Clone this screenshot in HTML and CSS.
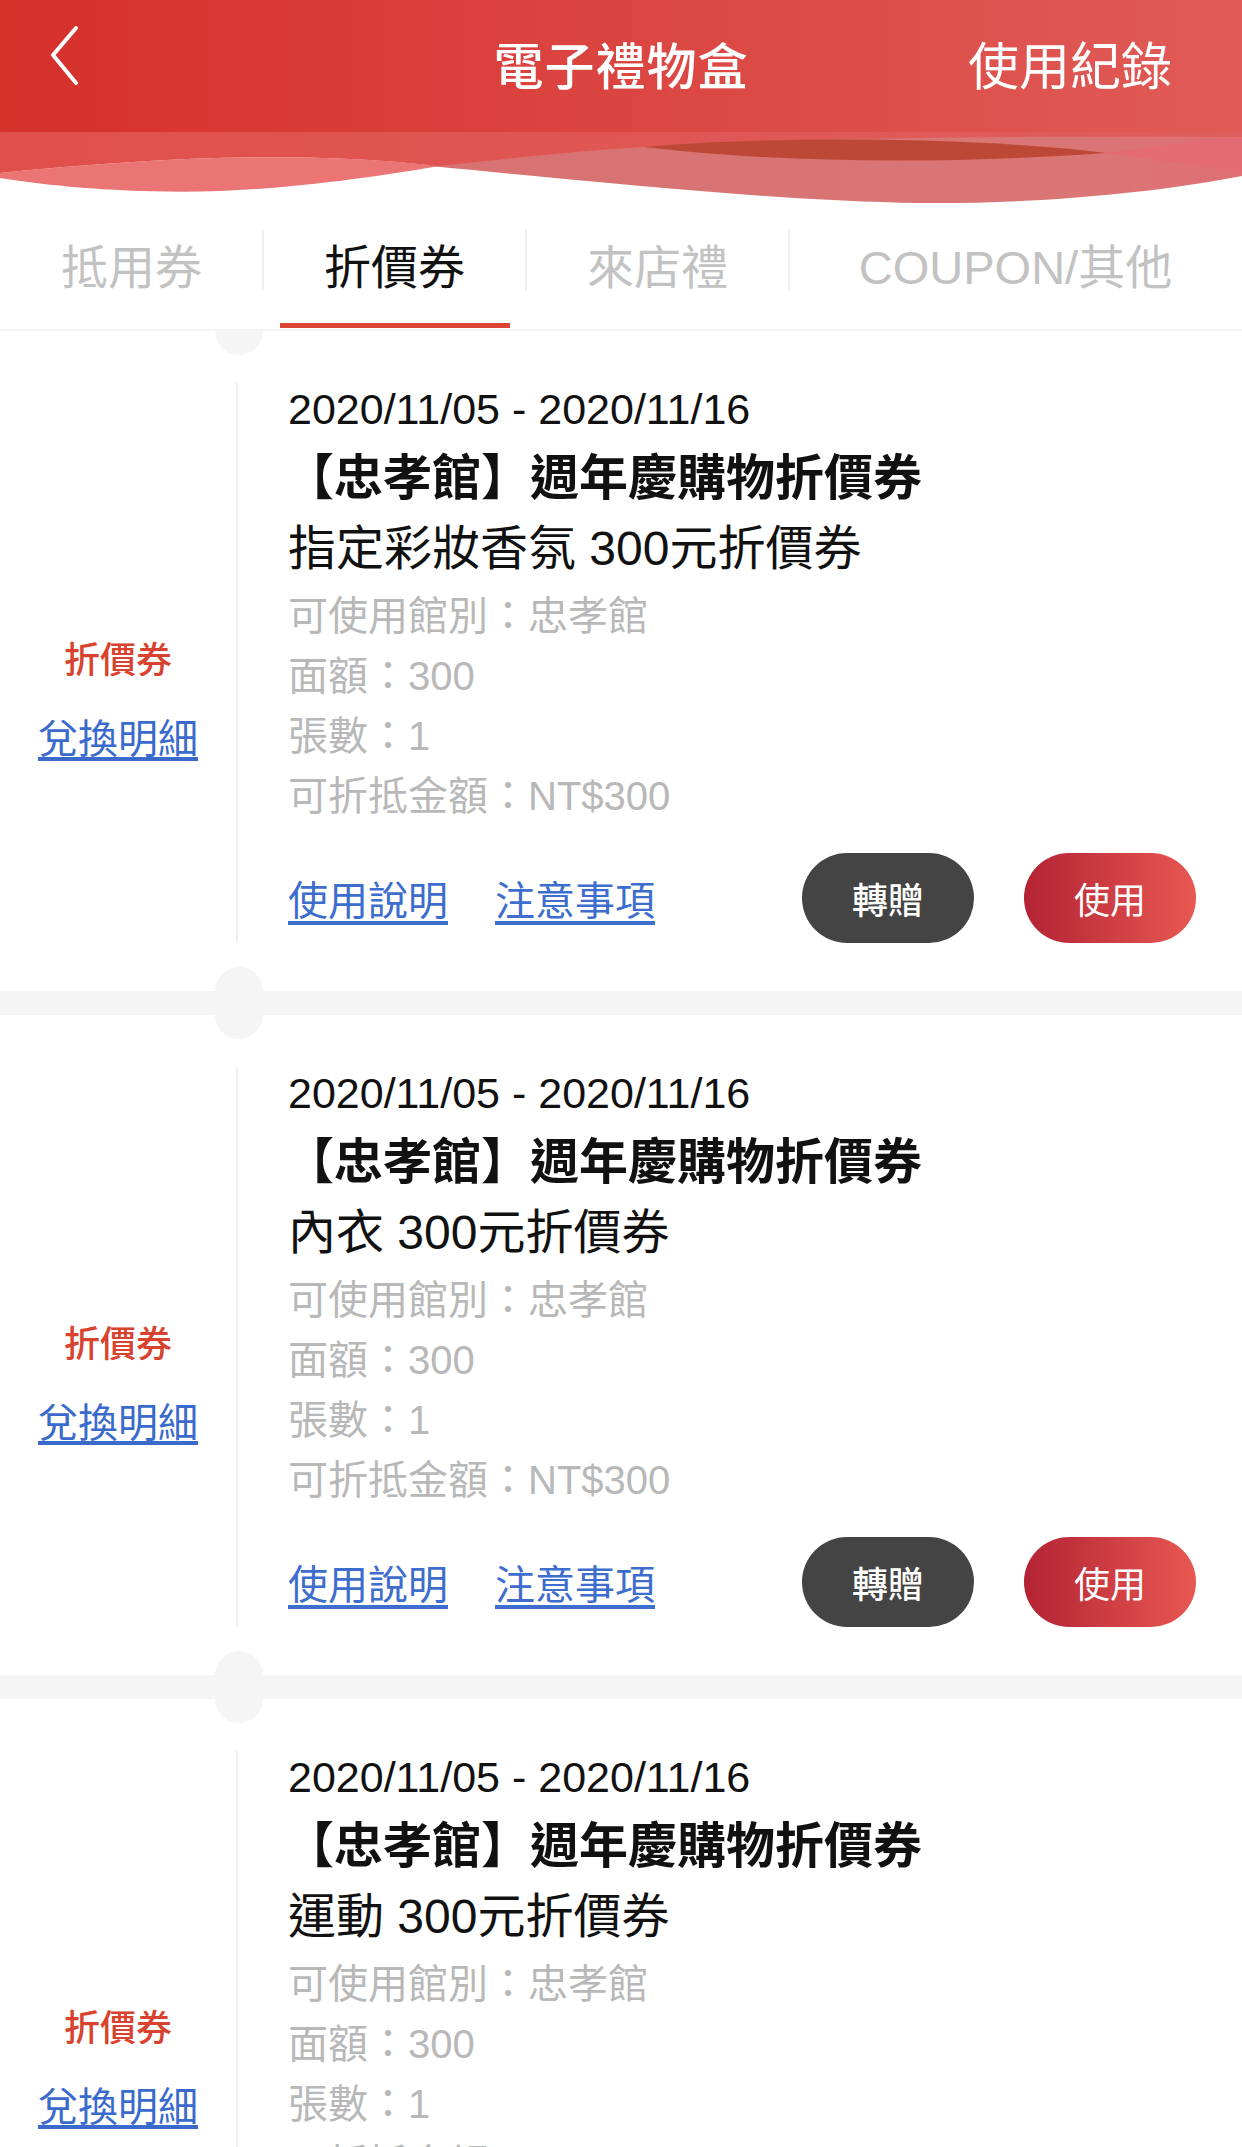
FILE: index.html
```html
<!DOCTYPE html>
<html lang="zh-Hant">
<head>
    <meta charset="UTF-8">
    <meta name="viewport" content="width=device-width, initial-scale=1.0">
    <title>電子禮物盒</title>
    <link rel="stylesheet" href="styles.css">
</head>
<body>

    <header class="topbar">
        <div class="nav">
            <a class="back" href="#">
                <svg width="30" height="62" viewBox="0 0 30 62"><path d="M26 3 L3 30 L26 58" fill="none" stroke="#fff" stroke-width="4" stroke-linecap="round" stroke-linejoin="round"/></svg>
            </a>
            <h1 class="title">電子禮物盒</h1>
            <a class="record" href="#">使用紀錄</a>
        </div>
        <svg class="wave" viewBox="0 0 1242 74" preserveAspectRatio="none">
            <defs>
                <linearGradient id="gp" x1="0" y1="0" x2="1" y2="0">
                    <stop offset="0" stop-color="#d87272"/>
                    <stop offset="0.8" stop-color="#da7676"/>
                    <stop offset="1" stop-color="#e06e72"/>
                </linearGradient>
                <linearGradient id="band" x1="0" y1="0" x2="1" y2="0">
                    <stop offset="0" stop-color="#e0504a"/>
                    <stop offset="1" stop-color="#df5d5c"/>
                </linearGradient>
            </defs>
            <path d="M430 0 H1242 V44 C1150 62 1030 72 920 71 C780 69 620 52 430 34 Z" fill="url(#gp)"/>
            <path d="M0 41 C150 26 300 18 440 34 C380 44 300 56 220 59 C130 62 50 54 0 46 Z" fill="#eb7474"/>
            <path d="M0 0 H1242 V5 C1000 4 800 5 644 15 C560 20 500 28 438 34 C300 18 150 26 0 41 Z" fill="url(#band)"/>
            <path d="M644 15 C740 6 950 2 1106 21 C980 30 800 34 644 15 Z" fill="#bd4836"/>
            <path d="M1106 21 C1160 14 1200 8 1242 5 V40 C1200 34 1150 27 1106 21 Z" fill="#e46b73"/>
        </svg>
    </header>

    <nav class="tabs">
        <a class="tab" href="#">抵用券</a>
        <a class="tab active" href="#">折價券</a>
        <a class="tab" href="#">來店禮</a>
        <a class="tab" href="#">COUPON/其他</a>
    </nav>

    <main class="list">
        <div class="coupon">
            <div class="row">
                <div class="side">
                    <div class="kind">折價券</div>
                    <a class="detail" href="#">兌換明細</a>
                </div>
                <div class="main">
                    <div class="date">2020/11/05 - 2020/11/16</div>
                    <div class="name">【忠孝館】週年慶購物折價券</div>
                    <div class="desc">指定彩妝香氛 300元折價券</div>
                    <div class="info first">可使用館別：忠孝館</div>
                    <div class="info">面額：300</div>
                    <div class="info">張數：1</div>
                    <div class="info">可折抵金額：NT$300</div>
                    <div class="actions">
                        <a class="link" href="#">使用說明</a>
                        <a class="link" href="#">注意事項</a>
                        <div class="buttons">
                            <button class="btn gift">轉贈</button>
                            <button class="btn use">使用</button>
                        </div>
                    </div>
                </div>
            </div>
        </div>

        <div class="coupon">
            <div class="row">
                <div class="side">
                    <div class="kind">折價券</div>
                    <a class="detail" href="#">兌換明細</a>
                </div>
                <div class="main">
                    <div class="date">2020/11/05 - 2020/11/16</div>
                    <div class="name">【忠孝館】週年慶購物折價券</div>
                    <div class="desc">內衣 300元折價券</div>
                    <div class="info first">可使用館別：忠孝館</div>
                    <div class="info">面額：300</div>
                    <div class="info">張數：1</div>
                    <div class="info">可折抵金額：NT$300</div>
                    <div class="actions">
                        <a class="link" href="#">使用說明</a>
                        <a class="link" href="#">注意事項</a>
                        <div class="buttons">
                            <button class="btn gift">轉贈</button>
                            <button class="btn use">使用</button>
                        </div>
                    </div>
                </div>
            </div>
        </div>

        <div class="coupon">
            <div class="row">
                <div class="side">
                    <div class="kind">折價券</div>
                    <a class="detail" href="#">兌換明細</a>
                </div>
                <div class="main">
                    <div class="date">2020/11/05 - 2020/11/16</div>
                    <div class="name">【忠孝館】週年慶購物折價券</div>
                    <div class="desc">運動 300元折價券</div>
                    <div class="info first">可使用館別：忠孝館</div>
                    <div class="info">面額：300</div>
                    <div class="info">張數：1</div>
                    <div class="info">可折抵金額：NT$300</div>
                    <div class="actions">
                        <a class="link" href="#">使用說明</a>
                        <a class="link" href="#">注意事項</a>
                        <div class="buttons">
                            <button class="btn gift">轉贈</button>
                            <button class="btn use">使用</button>
                        </div>
                    </div>
                </div>
            </div>
        </div>
    </main>

</body>
</html>
```

FILE: styles.css
```css
/* General Body Styles */
body {
    font-family: "Liberation Sans", "Noto Sans CJK TC", sans-serif;
    margin: 0;
    background-color: #fff;
    color: #111;
    overflow: hidden;
}

a {
    text-decoration: none;
}

/* Header */
.topbar {
    display: block;
}

.nav {
    display: grid;
    grid-template-columns: 1fr auto 1fr;
    align-items: center;
    height: 132px;
    padding-bottom: 6px;
    box-sizing: border-box;
    background: linear-gradient(to right, #d6302b, #e05b57);
    color: #fff;
}

.back {
    display: flex;
    padding-left: 50px;
    padding-bottom: 14px;
}

.title {
    margin: 0;
    font-size: 50px;
    font-weight: 500;
    letter-spacing: 1px;
    color: #fff;
}

.record {
    justify-self: end;
    padding-right: 70px;
    font-size: 51px;
    color: #fff;
}

.wave {
    display: block;
    width: 100%;
    height: 74px;
}

/* Tabs */
.tabs {
    position: relative;
    z-index: 1;
    display: grid;
    grid-template-columns: 263px 263px 263px 1fr;
    height: 125px;
    padding-bottom: 8px;
    box-sizing: border-box;
    background-color: #fff;
    border-bottom: 2px solid #f3f3f3;
}

.tab {
    position: relative;
    display: flex;
    align-items: center;
    justify-content: center;
    font-size: 47px;
    color: #c2c2c2;
}

.tab + .tab::before {
    content: "";
    position: absolute;
    left: -1px;
    top: 24px;
    width: 2px;
    height: 60px;
    background-color: #eeeeee;
}

.tab.active {
    color: #111;
}

.tab.active::after {
    content: "";
    position: absolute;
    bottom: -7px;
    left: 17px;
    width: 230px;
    height: 5px;
    background-color: #db4433;
}

/* Coupon List */
.coupon {
    position: relative;
    padding: 52px 0 48px;
    border-bottom: 24px solid #f5f5f5;
}

.coupon::before,
.coupon::after {
    content: "";
    position: absolute;
    left: 215px;
    width: 48px;
    height: 48px;
    border-radius: 50%;
    background-color: #f5f5f5;
}

.coupon::before {
    top: -24px;
}

.coupon::after {
    bottom: -24px;
}

.row {
    display: flex;
    height: 560px;
}

.side {
    width: 238px;
    border-right: 2px solid #f0f0f0;
    padding-top: 254px;
    text-align: center;
    box-sizing: border-box;
}

.kind {
    font-size: 36px;
    line-height: 48px;
    font-weight: 500;
    color: #d8432f;
}

.detail {
    display: block;
    margin-top: 26px;
    font-size: 40px;
    line-height: 56px;
    color: #3a6bcc;
    text-decoration: underline;
    text-underline-offset: 4px;
}

.main {
    flex: 1;
    padding: 0 46px 0 50px;
}

.date {
    font-size: 43px;
    line-height: 52px;
}

.name {
    font-size: 49px;
    line-height: 86px;
    font-weight: 700;
    margin-left: -3px;
}

.desc {
    font-size: 48px;
    line-height: 56px;
}

.info {
    font-size: 40px;
    line-height: 60px;
    color: #b8b8b8;
}

.info.first {
    margin-top: 9px;
}

/* Actions */
.actions {
    display: flex;
    align-items: center;
    gap: 47px;
    height: 90px;
    margin-top: 27px;
}

.link {
    font-size: 40px;
    color: #3d6dcd;
    text-decoration: underline;
    text-underline-offset: 6px;
}

.buttons {
    display: flex;
    gap: 50px;
    margin-left: auto;
}

.btn {
    width: 172px;
    height: 90px;
    border: none;
    border-radius: 45px;
    font-family: "Liberation Sans", "Noto Sans CJK TC", sans-serif;
    font-size: 36px;
    color: #fff;
    padding: 0;
}

.btn.gift {
    background-color: #444;
    font-weight: 500;
}

.btn.use {
    background: linear-gradient(to right, #b32333, #e85852);
}
```
